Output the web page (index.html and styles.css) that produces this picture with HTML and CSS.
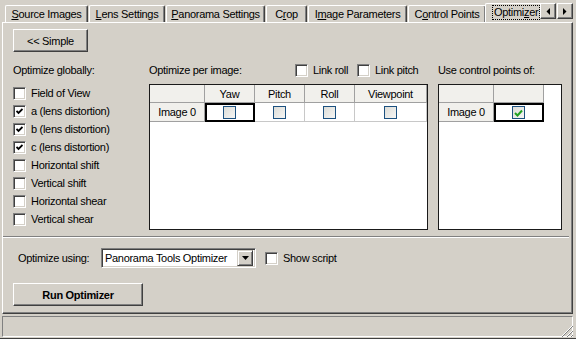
FILE: index.html
```html
<!DOCTYPE html>
<html lang="en">
<head>
    <meta charset="UTF-8">
    <title>Optimizer</title>
    <link rel="stylesheet" href="styles.css">
</head>
<body>
    <div class="window">
        <div class="tabbar">
            <div class="tabs">
                <div class="tab tab-source"><u>S</u>ource Images</div>
                <div class="tab tab-lens"><u>L</u>ens Settings</div>
                <div class="tab tab-pano"><u>P</u>anorama Settings</div>
                <div class="tab tab-crop">C<u>r</u>op</div>
                <div class="tab tab-params">I<u>m</u>age Parameters</div>
                <div class="tab tab-cp">C<u>o</u>ntrol Points</div>
                <div class="tab active"><span class="focus">Optimi<u>z</u>er</span></div>
            </div>
            <div class="scroller">
                <div class="arrow-btn">
                    <svg width="4" height="7" viewBox="0 0 4 7"><polygon points="4,0 4,7 0.5,3.5" fill="#000"/></svg>
                </div>
                <div class="arrow-btn">
                    <svg width="4" height="7" viewBox="0 0 4 7"><polygon points="0,0 0,7 3.5,3.5" fill="#000"/></svg>
                </div>
            </div>
        </div>

        <div class="panel">
            <div class="toolbar">
                <div class="btn simple">&lt;&lt; Simple</div>
            </div>

            <div class="main">
                <div class="col global">
                    <div class="col-head">Optimize globally:</div>
                    <div class="check-list">
                        <div class="check-row"><span class="cb"></span>Field of View</div>
                        <div class="check-row"><span class="cb checked"><svg width="7" height="7" viewBox="0 0 7 7"><polyline points="0.5,3 2.5,5 6.5,1" fill="none" stroke="#000" stroke-width="1.8"/></svg></span>a (lens distortion)</div>
                        <div class="check-row"><span class="cb checked"><svg width="7" height="7" viewBox="0 0 7 7"><polyline points="0.5,3 2.5,5 6.5,1" fill="none" stroke="#000" stroke-width="1.8"/></svg></span>b (lens distortion)</div>
                        <div class="check-row"><span class="cb checked"><svg width="7" height="7" viewBox="0 0 7 7"><polyline points="0.5,3 2.5,5 6.5,1" fill="none" stroke="#000" stroke-width="1.8"/></svg></span>c (lens distortion)</div>
                        <div class="check-row"><span class="cb"></span>Horizontal shift</div>
                        <div class="check-row"><span class="cb"></span>Vertical shift</div>
                        <div class="check-row"><span class="cb"></span>Horizontal shear</div>
                        <div class="check-row"><span class="cb"></span>Vertical shear</div>
                    </div>
                </div>

                <div class="col per-image">
                    <div class="col-head">
                        <span class="head-title">Optimize per image:</span>
                        <span class="head-check link-roll"><span class="cb"></span>Link roll</span>
                        <span class="head-check"><span class="cb"></span>Link pitch</span>
                    </div>
                    <div class="grid grid-images">
                        <div class="gh corner"></div>
                        <div class="gh">Yaw</div>
                        <div class="gh">Pitch</div>
                        <div class="gh">Roll</div>
                        <div class="gh">Viewpoint</div>
                        <div class="gh-rest"></div>
                        <div class="gh row-head">Image 0</div>
                        <div class="gc selected"><span class="gcb"></span></div>
                        <div class="gc"><span class="gcb"></span></div>
                        <div class="gc"><span class="gcb"></span></div>
                        <div class="gc"><span class="gcb"></span></div>
                        <div class="gc-rest"></div>
                    </div>
                </div>

                <div class="col cp">
                    <div class="col-head">Use control points of:</div>
                    <div class="grid grid-cp">
                        <div class="gh corner"></div>
                        <div class="gh"></div>
                        <div class="gh-rest"></div>
                        <div class="gh row-head">Image 0</div>
                        <div class="gc selected"><span class="gcb"><svg width="9" height="8" viewBox="0 0 9 8"><polyline points="1,4 3.5,6.5 8,1.5" fill="none" stroke="#21a121" stroke-width="2"/></svg></span></div>
                        <div class="gc-rest"></div>
                    </div>
                </div>
            </div>

            <div class="sep"></div>

            <div class="using-row">
                <span class="using-label">Optimize using:</span>
                <div class="select">
                    <span class="select-text">Panorama Tools Optimizer</span>
                    <span class="select-btn">
                        <svg width="7" height="4" viewBox="0 0 7 4"><polygon points="0,0 7,0 3.5,4" fill="#000"/></svg>
                    </span>
                </div>
                <span class="head-check show-script"><span class="cb"></span>Show script</span>
            </div>

            <div class="run-row">
                <div class="btn run">Run Optimizer</div>
            </div>
        </div>

        <div class="status">
            <div class="status-field"></div>
            <div class="grip">
                <svg width="12" height="12" viewBox="0 0 12 12">
                    <line x1="11" y1="1" x2="1" y2="11" stroke="#fff"/>
                    <line x1="12" y1="1" x2="1" y2="12" stroke="#808080"/>
                    <line x1="12" y1="5" x2="5" y2="12" stroke="#fff"/>
                    <line x1="12" y1="6" x2="6" y2="12" stroke="#808080"/>
                    <line x1="12" y1="9" x2="9" y2="12" stroke="#fff"/>
                    <line x1="12" y1="10" x2="10" y2="12" stroke="#808080"/>
                </svg>
            </div>
        </div>
    </div>
</body>
</html>
```

FILE: styles.css
```css
body {
    margin: 0;
    background-color: #d4d0c8;
    font-family: "Liberation Sans", Arial, sans-serif;
    font-size: 11px;
    letter-spacing: -0.3px;
    color: #000;
}
.window {
    width: 576px;
    height: 339px;
    box-sizing: border-box;
    padding: 0 3px 1px 2px;
    background-color: #d4d0c8;
    border-bottom: 1px solid #404040;
    display: flex;
    flex-direction: column;
    overflow: hidden;
}

/* Tabs */
.tabbar {
    height: 22px;
    display: flex;
    align-items: flex-end;
}
.tabs {
    flex: 1;
    display: flex;
    align-items: flex-end;
    padding-left: 3px;
    overflow: hidden;
    height: 22px;
}
.tab {
    flex-shrink: 0;
    height: 17px;
    line-height: 16px;
    box-sizing: border-box;
    border-top: 1px solid #fff;
    border-left: 1px solid #fff;
    border-right: 1px solid #404040;
    box-shadow: inset -1px 0 #808080;
    border-radius: 2px 2px 0 0;
    margin-right: 1px;
    white-space: nowrap;
    text-align: center;
}
.tab-source { width: 83px; }
.tab-lens { width: 76px; }
.tab-pano { width: 99px; }
.tab-crop { width: 41px; }
.tab-params { width: 99px; }
.tab-cp { width: 78px; }
.tab.active {
    width: 60px;
    height: 20px;
    margin-left: -2px;
    margin-bottom: -1px;
    padding-left: 6px;
    text-align: left;
    position: relative;
    z-index: 1;
    background-color: #d4d0c8;
}
.focus {
    display: inline-block;
    border: 1px dotted #000;
    line-height: 13px;
    padding: 0 1px;
    margin-top: 1px;
}
.scroller {
    display: flex;
    gap: 1px;
    margin-bottom: 3px;
    flex-shrink: 0;
    position: relative;
    z-index: 2;
    background-color: #d4d0c8;
}
.arrow-btn {
    width: 16px;
    height: 16px;
    box-sizing: border-box;
    border: 1px solid;
    border-color: #fff #404040 #404040 #fff;
    box-shadow: inset -1px -1px #808080;
    display: flex;
    align-items: center;
    justify-content: center;
}

/* Panel */
.panel {
    height: 292px;
    box-sizing: border-box;
    border-top: 1px solid #fff;
    border-left: 1px solid #fff;
    border-right: 1px solid #404040;
    border-bottom: 1px solid #404040;
    box-shadow: inset -1px -1px #808080;
    padding: 6px 10px 0 10px;
}
.btn {
    box-sizing: border-box;
    height: 23px;
    border: 1px solid;
    border-color: #fff #404040 #404040 #fff;
    box-shadow: inset -1px -1px #808080;
    display: flex;
    align-items: center;
    justify-content: center;
}
.simple {
    width: 75px;
}
.main {
    margin-top: 10px;
    display: flex;
}
.col-head {
    height: 16px;
    line-height: 16px;
    display: flex;
    align-items: center;
}
.global {
    width: 137px;
}
.per-image {
    width: 280px;
    margin-right: 10px;
}
.cp {
    width: 125px;
}
.check-list {
    margin-top: 6px;
}
.check-row {
    height: 18px;
    display: flex;
    align-items: center;
    white-space: nowrap;
}
.cb {
    width: 13px;
    height: 13px;
    box-sizing: border-box;
    flex-shrink: 0;
    background-color: #fff;
    border: 1px solid;
    border-color: #808080 #fff #fff #808080;
    box-shadow: inset 1px 1px #404040, inset -1px -1px #d4d0c8;
    margin-right: 5px;
    display: flex;
    align-items: center;
    justify-content: center;
}
.head-title {
    width: 146px;
}
.head-check {
    display: flex;
    align-items: center;
    white-space: nowrap;
}
.link-roll {
    width: 62px;
}

/* Grids */
.grid {
    margin-top: 6px;
    height: 146px;
    box-sizing: border-box;
    border: 1px solid #1a1a1a;
    background-color: #fff;
    display: grid;
    grid-template-rows: 18px 19px;
    align-content: start;
}
.grid-images {
    grid-template-columns: 55px 50px 50px 50px 72px 1fr;
}
.grid-cp {
    grid-template-columns: 55px 50px 1fr;
}
.gh {
    background-color: #f1f0ec;
    border-right: 1px solid #a0a0a0;
    border-bottom: 1px solid #a0a0a0;
    display: flex;
    align-items: center;
    justify-content: center;
    box-sizing: border-box;
}
.gh-rest, .gc-rest {
    background-color: #fff;
}
.gc {
    border-right: 1px solid #c8c8c8;
    border-bottom: 1px solid #c8c8c8;
    box-sizing: border-box;
    display: flex;
    align-items: center;
    justify-content: center;
}
.gc.selected {
    border: 2px solid #000;
}
.gcb {
    width: 13px;
    height: 13px;
    box-sizing: border-box;
    border: 1px solid #1c5180;
    background: linear-gradient(135deg, #dcdcd7, #f6f6f4);
    display: flex;
    align-items: center;
    justify-content: center;
}

/* Bottom controls */
.sep {
    margin: 6px -7px 0 -10px;
    border-top: 1px solid #808080;
    border-bottom: 1px solid #fff;
}
.using-row {
    margin-top: 10px;
    height: 20px;
    display: flex;
    align-items: center;
}
.using-label {
    width: 88px;
    padding-left: 5px;
    box-sizing: border-box;
}
.select {
    width: 155px;
    height: 20px;
    box-sizing: border-box;
    background-color: #fff;
    border: 1px solid;
    border-color: #808080 #fff #fff #808080;
    box-shadow: inset 1px 1px #404040, inset -1px -1px #d4d0c8;
    padding: 2px;
    display: flex;
    align-items: center;
}
.select-text {
    flex: 1;
    padding-left: 1px;
    white-space: nowrap;
}
.select-btn {
    width: 16px;
    height: 16px;
    box-sizing: border-box;
    background-color: #d4d0c8;
    border: 1px solid;
    border-color: #d4d0c8 #404040 #404040 #d4d0c8;
    box-shadow: inset 1px 1px #fff, inset -1px -1px #808080;
    display: flex;
    align-items: center;
    justify-content: center;
}
.show-script {
    margin-left: 9px;
}
.run-row {
    margin-top: 15px;
}
.run {
    width: 130px;
    font-weight: bold;
}

/* Status bar */
.status {
    margin-top: 2px;
    height: 21px;
    display: flex;
    align-items: stretch;
}
.status-field {
    flex: 1;
    border: 1px solid;
    border-color: #808080 #fff #fff #808080;
}
.grip {
    width: 13px;
    display: flex;
    align-items: flex-end;
    justify-content: flex-end;
    margin-left: -13px;
}
```
